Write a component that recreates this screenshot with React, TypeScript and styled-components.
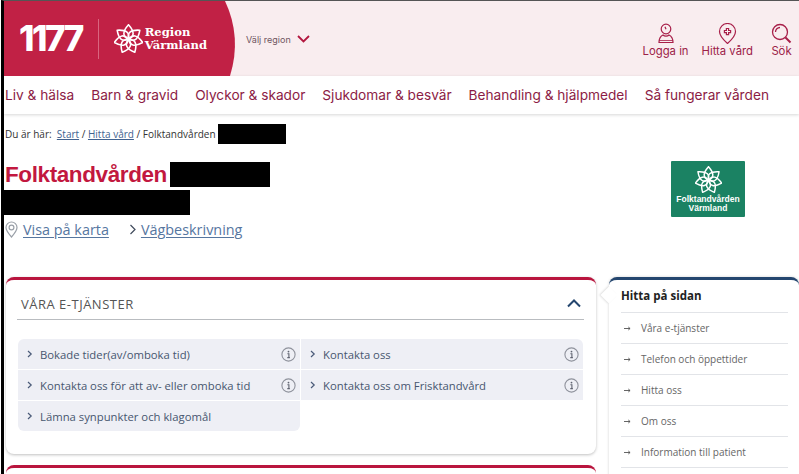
import React from "react";
import styled, { createGlobalStyle } from "styled-components";

const GlobalStyle = createGlobalStyle`
  html, body {
    margin: 0;
    height: 474px;
    overflow: hidden;
    background: #fff;
    font-family: "Open Sans", sans-serif;
  }
`;

const petals = [0, 51.4, 102.8, 154.3, 205.7, 257.1, 308.6];

const Flower: React.FC<{ size: number }> = ({ size }) => (
  <svg width={size} height={size} viewBox="0 0 40 40" fill="none" stroke="#fff" strokeWidth="2.2" strokeLinejoin="round">
    {petals.map((a) => (
      <path key={a} transform={`rotate(${a} 20 21)`} d="M20 21 C12 17 11 11 20 1 C29 11 28 17 20 21Z" />
    ))}
    <circle cx="20" cy="21" r="1.8" fill="#fff" stroke="none" />
  </svg>
);

const Info = () => (
  <InfoIcon width="15" height="15" viewBox="0 0 15 15" fill="none">
    <circle cx="7.5" cy="7.5" r="6.6" stroke="#8f929c" strokeWidth="1.1" />
    <circle cx="7.5" cy="4.6" r="0.9" fill="#5f6370" />
    <path d="M6.4 6.7h1.5v3.6M6.3 10.6h2.6" stroke="#5f6370" strokeWidth="1.1" />
  </InfoIcon>
);

const Chevron = () => (
  <svg width="6" height="8" viewBox="0 0 6 8" fill="none" stroke="#4a5a78" strokeWidth="1.2">
    <path d="M1 1l3.2 3L1 7" />
  </svg>
);

const services = [
  { label: "Bokade tider(av/omboka tid)", info: true },
  { label: "Kontakta oss", info: true },
  { label: "Kontakta oss för att av- eller omboka tid", info: true },
  { label: "Kontakta oss om Frisktandvård", info: true },
  { label: "Lämna synpunkter och klagomål", info: false },
];

const pageLinks = ["Våra e-tjänster", "Telefon och öppettider", "Hitta oss", "Om oss", "Information till patient"];
const navItems = ["Liv & hälsa", "Barn & gravid", "Olyckor & skador", "Sjukdomar & besvär", "Behandling & hjälpmedel", "Så fungerar vården"];

export default function App() {
  return (
    <Page>
      <GlobalStyle />
      <Header>
        <Brand>
          <Logo1177>1177</Logo1177>
          <BrandRule />
          <Flower size={29} />
          <RegionName>Region<br />Värmland</RegionName>
        </Brand>
        <RegionPicker>
          Välj region
          <svg width="13" height="8" viewBox="0 0 13 8" fill="none" stroke="#b3173f" strokeWidth="1.8">
            <path d="M1 1l5.5 5.5L12 1" />
          </svg>
        </RegionPicker>
        <Tools>
          <Tool>
            <svg width="18" height="21" viewBox="0 0 18 21" fill="none" stroke="#a81f49" strokeWidth="1.2">
              <circle cx="9" cy="6" r="4.800" />
              <path d="M8 3.800l1 2.500" />
              <path d="M2 19.500c0-4.500 2-6.500 4-7.500 1.500 1.500 4.500 1.500 6 0 2 1 4 3 4 7.500z" />
              <path d="M2 17.500h14" strokeWidth="0.8" />
            </svg>
            Logga in
          </Tool>
          <Tool>
            <svg width="19" height="21" viewBox="0 0 19 21" fill="none" stroke="#a81f49" strokeWidth="1.2">
              <path d="M9.500 20.500C5 16.500 1.500 13 1.500 8.500a8 8 0 0 1 16 0c0 4.500-3.500 8-8 12z" />
              <path d="M8.400 5.500h2.200v2h2v2.200h-2v2H8.400v-2h-2V7.500h2z" />
            </svg>
            Hitta vård
          </Tool>
          <LastTool>
            <svg width="21" height="21" viewBox="0 0 21 21" fill="none" stroke="#a81f49" strokeWidth="1.3">
              <circle cx="9" cy="9" r="7.500" />
              <path d="M4.500 9A4.500 4.500 0 0 1 9 4.500" />
              <path d="M14.500 14.500l5 5" strokeWidth="2" />
            </svg>
            Sök
          </LastTool>
        </Tools>
      </Header>
      <Nav>
        {navItems.map((item) => (
          <NavItem key={item}>{item}</NavItem>
        ))}
      </Nav>
      <Breadcrumb>
        Du är här:&nbsp; <CrumbLink>Start</CrumbLink> / <CrumbLink>Hitta vård</CrumbLink> / Folktandvården
        <CrumbRedaction />
      </Breadcrumb>
      <Intro>
        <div>
          <TitleRow>
            <Title>Folktandvården</Title>
            <TitleRedaction />
          </TitleRow>
          <SubRedaction />
          <Links>
            <LinkItem>
              <svg width="13" height="17" viewBox="0 0 13 17" fill="none" stroke="#9aa0a8" strokeWidth="1.2">
                <path d="M6.500 16C3 12 1 9.500 1 6.500a5.500 5.500 0 0 1 11 0c0 3-2 5.500-5.500 9.500z" />
                <circle cx="6.500" cy="6.500" r="2.400" />
              </svg>
              <MapLink>Visa på karta</MapLink>
            </LinkItem>
            <LinkItem>
              <svg width="8" height="11" viewBox="0 0 8 11" fill="none" stroke="#3f4a5c" strokeWidth="1.2">
                <path d="M1.500 1l4.500 4.500L1.500 10" />
              </svg>
              <MapLink>Vägbeskrivning</MapLink>
            </LinkItem>
          </Links>
        </div>
        <GreenLogo>
          <Flower size={27} />
          <GreenLogoText>Folktandvården<br />Värmland</GreenLogoText>
        </GreenLogo>
      </Intro>
      <Columns>
        <MainColumn>
          <Card>
            <CardHead>
              <CardTitle>VÅRA E-TJÄNSTER</CardTitle>
              <svg width="14" height="9" viewBox="0 0 14 9" fill="none" stroke="#24466f" strokeWidth="2">
                <path d="M1 7.500l6-6 6 6" />
              </svg>
            </CardHead>
            <ServiceGrid>
              {services.map((s, i) => (
                <Service key={s.label} $last={i === services.length - 1}>
                  <Chevron />
                  <ServiceLabel>{s.label}</ServiceLabel>
                  {s.info && <Info />}
                </Service>
              ))}
            </ServiceGrid>
          </Card>
          <NextCard />
        </MainColumn>
        <Sidebar>
          <SideTitle>Hitta på sidan</SideTitle>
          {pageLinks.map((link) => (
            <SideLink key={link}>
              <svg width="7" height="5" viewBox="0 0 7 5" fill="none" stroke="#555" strokeWidth="0.9">
                <path d="M0 2.500h6M4.300 1l1.800 1.500L4.300 4" />
              </svg>
              {link}
            </SideLink>
          ))}
        </Sidebar>
      </Columns>
    </Page>
  );
}

const Page = styled.div`
  box-sizing: border-box;
  width: 798px;
  height: 474px;
  margin-left: 1px;
  border-left: 3px solid #000;
  border-top: 1px solid #555;
  overflow: hidden;
`;

const Header = styled.header`
  display: flex;
  align-items: center;
  height: 75px;
  background: #f9edef;
`;

const Brand = styled.div`
  display: flex;
  align-items: center;
  box-sizing: border-box;
  width: 232px;
  height: 75px;
  padding-left: 15px;
  background: #c12145;
  clip-path: path("M0 0H221Q238 36 226 75H0Z");
  color: #fff;
`;

const Logo1177 = styled.span`
  font-family: "Inter", sans-serif;
  font-weight: 800;
  font-size: 35px;
  letter-spacing: -2.5px;
  line-height: 1;
`;

const BrandRule = styled.div`
  width: 1px;
  height: 40px;
  margin: 0 15px 0 16px;
  background: #d9657f;
`;

const RegionName = styled.span`
  margin-left: 2px;
  font-family: "DejaVu Serif", serif;
  font-weight: 700;
  font-size: 11.600px;
  line-height: 13px;
`;

const RegionPicker = styled.div`
  display: flex;
  align-items: center;
  gap: 6px;
  margin-left: 10px;
  margin-top: 1px;
  font-family: "Inter", sans-serif;
  font-size: 9px;
  color: #6f5560;
`;

const Tools = styled.div`
  display: flex;
  gap: 13px;
  margin-left: auto;
  margin-right: 7px;
  margin-top: 3px;
`;

const Tool = styled.div`
  display: flex;
  flex-direction: column;
  align-items: center;
  font-family: "Inter", sans-serif;
  font-size: 11.300px;
  color: #9c2148;
`;

const LastTool = styled(Tool)`
  margin-left: 5px;
`;

const Nav = styled.nav`
  display: flex;
  gap: 17px;
  height: 38px;
  align-items: center;
  padding-left: 1px;
  box-shadow: 0 1px 3px rgba(0, 0, 0, 0.16);
`;

const NavItem = styled.span`
  font-family: "Inter", sans-serif;
  font-size: 13.680px;
  color: #8c1c45;
  white-space: nowrap;
`;

const Breadcrumb = styled.div`
  display: flex;
  align-items: center;
  height: 20px;
  margin-top: 10px;
  padding-left: 1px;
  font-size: 10px;
  color: #333;
  white-space: pre;
`;

const CrumbLink = styled.a`
  color: #41628f;
  text-decoration: underline;
`;

const CrumbRedaction = styled.span`
  width: 68px;
  height: 20px;
  margin-left: 2px;
  background: #000;
`;

const Intro = styled.section`
  display: flex;
  justify-content: space-between;
  align-items: flex-start;
  padding: 18px 54px 0 1px;
`;

const TitleRow = styled.div`
  display: flex;
  align-items: center;
  gap: 3px;
  height: 25px;
`;

const Title = styled.h1`
  margin: 0;
  font-family: "Liberation Sans", sans-serif;
  font-weight: 700;
  font-size: 22.500px;
  letter-spacing: -0.4px;
  color: #c2183f;
`;

const TitleRedaction = styled.span`
  width: 100px;
  height: 25px;
  background: #000;
`;

const SubRedaction = styled.div`
  width: 189px;
  height: 25px;
  margin: 3px 0 0 -4px;
  background: #000;
`;

const Links = styled.div`
  display: flex;
  gap: 20px;
  margin-top: 5px;
`;

const LinkItem = styled.div`
  display: flex;
  align-items: center;
  gap: 4px;
  &:first-child {
    gap: 5px;
  }
`;

const MapLink = styled.a`
  font-size: 14.400px;
  color: #56769f;
  text-decoration: underline;
  text-underline-offset: 2px;
`;

const GreenLogo = styled.div`
  display: flex;
  flex-direction: column;
  align-items: center;
  justify-content: center;
  gap: 2px;
  width: 74px;
  height: 56px;
  margin-top: -1px;
  background: #1b8263;
  border-radius: 1px;
`;

const GreenLogoText = styled.span`
  font-family: "Liberation Sans", sans-serif;
  font-weight: 700;
  font-size: 8.500px;
  line-height: 9px;
  text-align: center;
  color: #fff;
`;

const Columns = styled.div`
  display: flex;
  align-items: flex-start;
  gap: 13px;
  margin-top: 38px;
  padding-left: 2px;
`;

const MainColumn = styled.div`
  width: 590px;
  flex: none;
`;

const Card = styled.div`
  box-sizing: border-box;
  height: 177px;
  padding: 0 12px 0 12px;
  background: #fff;
  border-top: 3px solid #b9153e;
  border-radius: 8px;
  box-shadow: 0 1px 3px rgba(0, 0, 0, 0.25);
`;

const NextCard = styled.div`
  height: 20px;
  margin-top: 11px;
  border-top: 3px solid #b9153e;
  border-radius: 8px;
`;

const CardHead = styled.div`
  display: flex;
  justify-content: space-between;
  align-items: center;
  box-sizing: border-box;
  height: 40px;
  margin-left: -1px;
  padding: 8px 3px 0 4px;
  border-bottom: 1px solid #b9bcc0;
`;

const CardTitle = styled.h2`
  margin: 0;
  font-size: 13px;
  font-weight: 400;
  letter-spacing: 0.5px;
  color: #555;
`;

const ServiceGrid = styled.div`
  display: grid;
  grid-template-columns: 282px 282px;
  grid-auto-rows: 30px;
  gap: 1px;
  margin-top: 19px;
`;

const Service = styled.a<{ $last: boolean }>`
  display: flex;
  align-items: center;
  gap: 7px;
  padding: 0 4px 0 9px;
  background: #eeeff5;
  border-radius: ${(p) => (p.$last ? "0 0 6px 6px" : "0")};
  font-size: 11.300px;
  color: #47566f;
  &:nth-child(1) {
    border-top-left-radius: 6px;
  }
  &:nth-child(2) {
    border-top-right-radius: 6px;
  }
`;

const ServiceLabel = styled.span`
  flex: 1;
  white-space: nowrap;
`;

const InfoIcon = styled.svg`
  flex: none;
`;

const Sidebar = styled.aside`
  position: relative;
  box-sizing: border-box;
  width: 190px;
  height: 210px;
  padding: 0 11px 0 12px;
  background: #fff;
  border-top: 3px solid #24466f;
  border-radius: 8px 8px 0 0;
  box-shadow: 0 0 3px rgba(0, 0, 0, 0.18);
  &::before {
    content: "";
    position: absolute;
    top: 9px;
    left: -6px;
    width: 12px;
    height: 12px;
    background: #fff;
    transform: rotate(45deg);
    box-shadow: -1px 1px 2px rgba(0, 0, 0, 0.12);
  }
`;

const SideTitle = styled.h3`
  position: relative;
  box-sizing: border-box;
  height: 33px;
  margin: 0;
  padding-top: 8px;
  border-bottom: 1px solid #e2e4e8;
  font-size: 11.500px;
  font-weight: 700;
  color: #222;
`;

const SideLink = styled.a`
  display: flex;
  align-items: center;
  gap: 10px;
  box-sizing: border-box;
  height: 31px;
  padding-left: 3px;
  border-bottom: 1px solid #e2e4e8;
  font-size: 10px;
  color: #666;
`;
